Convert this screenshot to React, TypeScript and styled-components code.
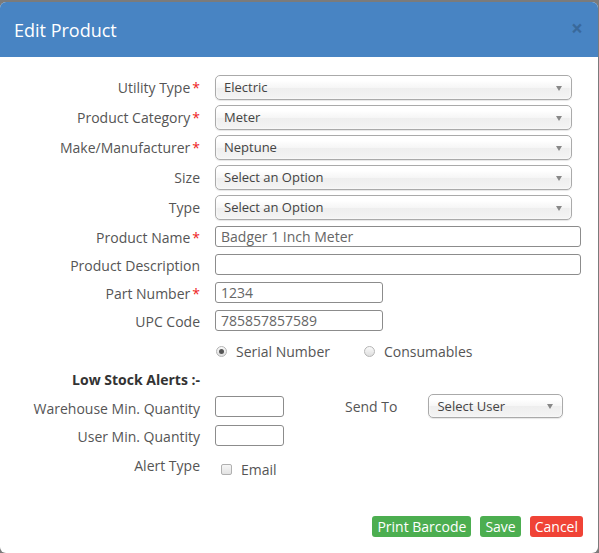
import React from 'react';
import styled, { createGlobalStyle } from 'styled-components';

const GlobalStyle = createGlobalStyle`
  html, body {
    margin: 0;
    padding: 0;
    background: #7b7b7b;
    font-family: 'Open Sans', 'Liberation Sans', sans-serif;
  }
  * { box-sizing: border-box; }
`;

const Modal = styled.div`
  margin: 2px 1px 0 0;
  height: 551px;
  background: #fff;
  border-radius: 6px;
  overflow: hidden;
  display: flex;
  flex-direction: column;
`;

const Header = styled.div`
  height: 55px;
  background: #4884c3;
  display: flex;
  align-items: center;
  justify-content: space-between;
  padding: 0 15px 0 14px;
`;

const Title = styled.h4`
  margin: 0;
  color: #fff;
  font-size: 18px;
  font-weight: 400;
`;

const Close = styled.span`
  color: #000;
  opacity: 0.2;
  font-size: 21px;
  font-weight: 700;
  line-height: 1;
  margin-top: -2px;
`;

const Body = styled.div`
  padding-top: 18px;
  flex: 1;
`;

const Row = styled.div<{ $h: number; $align?: string }>`
  display: grid;
  grid-template-columns: 200px 1fr;
  column-gap: 15px;
  height: ${(p) => p.$h}px;
  align-items: ${(p) => p.$align || 'start'};
`;

const Label = styled.label<{ $bold?: boolean; $offset?: number }>`
  text-align: right;
  font-size: 14px;
  color: ${(p) => (p.$bold ? '#333' : '#555')};
  font-weight: ${(p) => (p.$bold ? 700 : 400)};
  line-height: 19px;
  margin-top: ${(p) => p.$offset ?? 0}px;
  white-space: nowrap;
`;

const Req = styled.span`
  color: #ee2222;
  margin-left: 2px;
`;

const Select = styled.div<{ $w?: number }>`
  position: relative;
  width: ${(p) => (p.$w ? `${p.$w}px` : '357px')};
  height: ${(p) => (p.$w ? 24 : 25)}px;
  border: 1px solid #aaa;
  border-radius: 5px;
  background: linear-gradient(#fff 20%, #f6f6f6 50%, #eee 52%, #f4f4f4 100%);
  box-shadow: 0 0 3px #fff inset, 0 1px 1px rgba(0, 0, 0, 0.1);
  color: #444;
  font-size: 13px;
  line-height: ${(p) => (p.$w ? 22 : 23)}px;
  padding-left: 8px;
  &::after {
    content: '';
    position: absolute;
    right: 9px;
    top: 50%;
    margin-top: -2px;
    border-left: 3.5px solid transparent;
    border-right: 3.5px solid transparent;
    border-top: 5px solid #888;
  }
`;

const TextInput = styled.input<{ $w: number }>`
  display: block;
  width: ${(p) => p.$w}px;
  height: 21px;
  margin-top: 1px;
  border: 1px solid #8c8c8c;
  border-radius: 3px;
  padding: 0 5px;
  font-family: inherit;
  font-size: 14px;
  color: #666;
  background: #fff;
  outline: none;
`;

const Options = styled.div<{ $pad?: number; $top?: number }>`
  display: flex;
  align-items: center;
  padding-left: ${(p) => p.$pad ?? 1}px;
  margin-top: ${(p) => p.$top ?? 0}px;
  font-size: 14px;
  line-height: 19px;
  color: #555;
`;

const Choice = styled.span<{ $space?: number }>`
  display: inline-flex;
  align-items: center;
  gap: 9px;
  margin-right: ${(p) => p.$space ?? 0}px;
`;

const Radio = styled.span<{ $on?: boolean }>`
  position: relative;
  width: 11px;
  height: 11px;
  border-radius: 50%;
  border: 1px solid #b5b5b5;
  background: linear-gradient(#fafafa, #dedede);
  &::after {
    content: '';
    display: ${(p) => (p.$on ? 'block' : 'none')};
    position: absolute;
    left: 2px;
    top: 2px;
    width: 5px;
    height: 5px;
    border-radius: 50%;
    background: #555;
  }
`;

const Check = styled.span`
  width: 11px;
  height: 11px;
  border-radius: 2px;
  border: 1px solid #b0b0b0;
  background: linear-gradient(#f6f6f6, #e2e2e2);
`;

const Alerts = styled.div`
  display: flex;
  align-items: center;
`;

const SendTo = styled.span`
  font-size: 14px;
  color: #555;
  margin: 0 31px 0 61px;
`;

const Footer = styled.div`
  display: flex;
  justify-content: flex-end;
  gap: 9px;
  padding: 0 15px 16px 0;
`;

const Button = styled.button<{ $variant: 'green' | 'red' }>`
  height: 21px;
  padding: 0 5px;
  border: none;
  border-radius: 3px;
  background: ${(p) => (p.$variant === 'green' ? '#4cae50' : '#f04336')};
  color: #fff;
  font-family: inherit;
  font-size: 14px;
  line-height: 21px;
`;

const selects = [
  { label: 'Utility Type', req: true, value: 'Electric' },
  { label: 'Product Category', req: true, value: 'Meter' },
  { label: 'Make/Manufacturer', req: true, value: 'Neptune' },
  { label: 'Size', req: false, value: 'Select an Option' },
  { label: 'Type', req: false, value: 'Select an Option' },
];

const inputs = [
  { label: 'Product Name', req: true, value: 'Badger 1 Inch Meter', w: 366 },
  { label: 'Product Description', req: false, value: '', w: 366 },
  { label: 'Part Number', req: true, value: '1234', w: 168 },
  { label: 'UPC Code', req: false, value: '785857857589', w: 168 },
];

export default function App() {
  return (
    <>
      <GlobalStyle />
      <Modal>
        <Header>
          <Title>Edit Product</Title>
          <Close>×</Close>
        </Header>
        <Body>
          {selects.map((s) => (
            <Row key={s.label} $h={30}>
              <Label $offset={3}>
                {s.label}
                {s.req && <Req>*</Req>}
              </Label>
              <Select>{s.value}</Select>
            </Row>
          ))}
          {inputs.map((f) => (
            <Row key={f.label} $h={28}>
              <Label $offset={3}>
                {f.label}
                {f.req && <Req>*</Req>}
              </Label>
              <TextInput $w={f.w} defaultValue={f.value} />
            </Row>
          ))}
          <Row $h={28} $align="center">
            <span />
            <Options>
              <Choice $space={34}>
                <Radio $on />
                Serial Number
              </Choice>
              <Choice>
                <Radio />
                Consumables
              </Choice>
            </Options>
          </Row>
          <Row $h={29} $align="center">
            <Label $bold>Low Stock Alerts :-</Label>
            <span />
          </Row>
          <Row $h={30}>
            <Label $offset={5}>Warehouse Min. Quantity</Label>
            <Alerts>
              <TextInput $w={69} />
              <SendTo>Send To</SendTo>
              <Select $w={135}>Select User</Select>
            </Alerts>
          </Row>
          <Row $h={30}>
            <Label $offset={3}>User Min. Quantity</Label>
            <TextInput $w={69} />
          </Row>
          <Row $h={26}>
            <Label $offset={2}>Alert Type</Label>
            <Options $pad={6} $top={6}>
              <Choice>
                <Check />
                Email
              </Choice>
            </Options>
          </Row>
        </Body>
        <Footer>
          <Button $variant="green">Print Barcode</Button>
          <Button $variant="green">Save</Button>
          <Button $variant="red">Cancel</Button>
        </Footer>
      </Modal>
    </>
  );
}
